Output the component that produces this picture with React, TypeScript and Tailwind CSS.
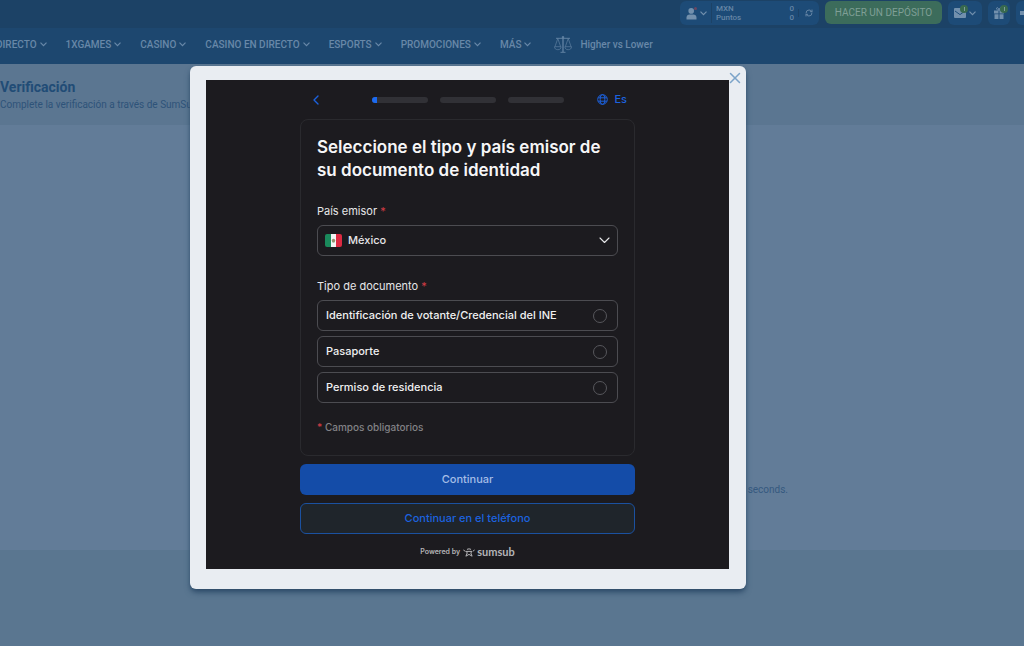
import { FC, ReactNode, useState } from 'react'
import { ChevronLeft, RefreshCw, X } from 'lucide-react'
import clsx from 'clsx'

const NAV_ITEMS = [
  'DIRECTO',
  '1XGAMES',
  'CASINO',
  'CASINO EN DIRECTO',
  'ESPORTS',
  'PROMOCIONES',
  'MÁS',
]

const DOCUMENT_TYPES = [
  { id: 'ine', label: 'Identificación de votante/Credencial del INE' },
  { id: 'passport', label: 'Pasaporte' },
  { id: 'residence', label: 'Permiso de residencia' },
]

const Caret = () => (
  <svg
    width="7"
    height="5"
    viewBox="0 0 7 5"
    fill="none"
    stroke="currentColor"
    strokeWidth="1.2"
  >
    <path d="M.5.7l3 3 3-3" />
  </svg>
)

const SelectArrow = () => (
  <svg
    width="11"
    height="7"
    viewBox="0 0 11 7"
    fill="none"
    stroke="currentColor"
    strokeWidth="1.1"
    strokeLinecap="round"
    strokeLinejoin="round"
  >
    <path d="M1 1l4.5 4.5L10 1" />
  </svg>
)

const UserIcon = () => (
  <svg width="11" height="13" viewBox="0 0 11 13" fill="currentColor">
    <circle cx="5.2" cy="3.9" r="2.8" />
    <path d="M0.5 12.4v-2C0.5 8.4 2 7.4 3.6 7.4h3.8c1.6 0 3.1 1 3.1 3v2z" />
  </svg>
)

const MailIcon = () => (
  <svg width="12" height="10" viewBox="0 0 12 10">
    <rect width="12" height="10" rx="1" fill="currentColor" />
    <path d="M1 3l5 3.6L11 3" fill="none" stroke="#1e4f7c" />
  </svg>
)

const GiftIcon = () => (
  <svg width="12" height="12" viewBox="0 0 12 12" fill="currentColor">
    <path d="M1 3.5h4.5v3H1zM6.5 3.5H11v3H6.5zM1.5 7.2h4V12h-4zM6.5 7.2h4V12h-4z" />
    <path
      d="M6 3.2C3 3.2 3 .7 4.3.7 5.3.7 6 2 6 3.2 6 2 6.7.7 7.7.7 9 .7 9 3.2 6 3.2z"
      fill="none"
      stroke="currentColor"
    />
  </svg>
)

const ScalesIcon = () => (
  <svg
    width="18"
    height="17"
    viewBox="0 0 18 17"
    fill="none"
    stroke="currentColor"
    strokeWidth="0.6"
  >
    <path d="M9 0v16" strokeWidth="1.2" />
    <path d="M6.5 16.3h5M2 2.3h14M7.8 1.2h2.4" strokeWidth="0.9" />
    <path d="M3.8 2.5L1 10.5M3.8 2.5l2.8 8M14.2 2.5l-2.8 8M14.2 2.5l2.8 8" />
    <path d="M.5 10.7h6.6c0 2-1.3 3-3.3 3s-3.3-1-3.3-3zM10.9 10.7h6.6c0 2-1.3 3-3.3 3s-3.3-1-3.3-3z" />
  </svg>
)

const GlobeIcon = () => (
  <svg
    width="11"
    height="11"
    viewBox="0 0 11 11"
    fill="none"
    stroke="currentColor"
    strokeWidth="1"
  >
    <circle cx="5.5" cy="5.5" r="4.8" />
    <ellipse cx="5.5" cy="5.5" rx="2.3" ry="4.8" />
    <path d="M1.2 3.8h8.6M1.2 7.2h8.6" />
  </svg>
)

const MexicoFlag = () => (
  <svg width="17" height="13" viewBox="0 0 17 13" className="rounded-xs">
    <path d="M0 0h6v13H0z" fill="#1a8a5c" />
    <path d="M6 0h5v13H6z" fill="#f4f4f4" />
    <path d="M11 0h6v13h-6z" fill="#dc2a42" />
    <ellipse cx="8.5" cy="6.5" rx="1.7" ry="1.8" fill="#9a8d6c" />
    <path d="M7 7.5c.8 1 2.2 1 3 0" fill="none" stroke="#5d8d5c" strokeWidth="0.6" />
  </svg>
)

const SumsubMark = () => (
  <svg
    width="12"
    height="9"
    viewBox="0 0 12 9"
    fill="none"
    stroke="currentColor"
    strokeWidth="1"
    strokeLinecap="round"
    strokeLinejoin="round"
  >
    <path d="M4.3 1.2a2.6 1.6 0 0 1 3.4 0" />
    <path d="M.7 2.2l1 .7M11.3 2.2l-1 .7" />
    <path d="M3 3.4h6L7.8 5l1.3 3.2L6 6.4 2.9 8.2 4.2 5z" />
  </svg>
)

interface HeaderChipProps {
  label: string
  badge?: boolean
  className?: string
  children: ReactNode
}

const HeaderChip: FC<HeaderChipProps> = ({
  label,
  badge = false,
  className,
  children,
}) => (
  <button
    type="button"
    aria-label={label}
    className={clsx(
      'relative flex h-6 shrink-0 items-center justify-center gap-[3px] rounded-md bg-[#1d4b77] text-[#7290ad]',
      className,
    )}
  >
    {children}
    {badge && (
      <span className="absolute top-1 left-3 flex size-2 items-center justify-center rounded-full bg-[#38694f]">
        <span className="h-1 w-px bg-[#7e9f96]" />
      </span>
    )}
  </button>
)

const TopBar = () => (
  <div className="flex h-7 items-start justify-end gap-1.5 bg-[#1c4266] pt-px">
    <div className="flex h-6 w-[139px] shrink-0 items-center rounded-md bg-[#1d4b77] text-[#6585a5]">
      <button
        type="button"
        aria-label="Cuenta"
        className="relative flex items-center gap-[3px] pl-1.5 text-[#7290ad]"
      >
        <UserIcon />
        <span className="absolute top-0 left-3.5 size-[3px] rounded-full bg-[#6b4560]" />
        <Caret />
      </button>
      <div className="ml-1 flex h-5 grow flex-col justify-center border-l border-[#1c4266] pr-1 pl-1 text-[8px] leading-[9px] font-medium">
        <div className="flex justify-between">
          <span>MXN</span>
          <span>0</span>
        </div>
        <div className="flex justify-between">
          <span>Puntos</span>
          <span>0</span>
        </div>
      </div>
      <button
        type="button"
        aria-label="Actualizar"
        className="border-l border-[#1c4266] px-1.5"
      >
        <RefreshCw size={8} strokeWidth={3} />
      </button>
    </div>
    <button
      type="button"
      className="h-[23px] w-[117px] shrink-0 rounded-md bg-[#3c6c5b] text-[10px] text-[#7f9f96]"
    >
      HACER UN DEPÓSITO
    </button>
    <HeaderChip label="Mensajes" badge className="w-[34px]">
      <MailIcon />
      <Caret />
    </HeaderChip>
    <HeaderChip label="Bonos" badge className="w-[22px]">
      <GiftIcon />
    </HeaderChip>
    <HeaderChip label="Ajustes" className="w-2 rounded-r-none">
      <span className="ml-1 size-1 bg-[#7290ad]" />
    </HeaderChip>
  </div>
)

const MainNav = () => (
  <nav className="flex h-9 items-center overflow-hidden bg-[#1d476f] pb-1 text-[10px] font-medium whitespace-nowrap text-[#6888a8]">
    <div className="-ml-1 flex items-center gap-[19px]">
      {NAV_ITEMS.map((item) => (
        <a key={item} href="#" className="flex items-center gap-[3px]">
          {item}
          <Caret />
        </a>
      ))}
      <a href="#" className="ml-1 flex items-center gap-2">
        <ScalesIcon />
        Higher vs Lower
      </a>
    </div>
  </nav>
)

const Steps = () => (
  <div className="flex gap-3">
    {[10, 0, 0].map((progress, index) => (
      <div
        key={index}
        className="h-1.5 w-14 overflow-hidden rounded-full bg-[#313136]"
      >
        <div className="h-full bg-[#1c6af0]" style={{ width: `${progress}%` }} />
      </div>
    ))}
  </div>
)

const Required = () => <span className="text-[#d13b44]">*</span>

const VerificationForm = () => {
  const [documentType, setDocumentType] = useState('')

  return (
    <form
      className="mx-auto flex w-[335px] flex-col font-['Inter',sans-serif]"
      onSubmit={(e) => e.preventDefault()}
    >
      <div className="grid h-[39px] grid-cols-[1fr_auto_1fr] items-center px-2 text-[#1c62df]">
        <button type="button" aria-label="Atrás" className="justify-self-start">
          <ChevronLeft size={16} strokeWidth={2} />
        </button>
        <Steps />
        <button
          type="button"
          className="flex items-center gap-1.5 justify-self-end text-[11px] font-medium"
        >
          <GlobeIcon />
          Es
        </button>
      </div>

      <div className="rounded-lg border border-[#2a2a2e] px-4 pt-4 pb-5">
        <h1 className="text-[17px] leading-[23px] font-semibold text-[#f6f6f7]">
          Seleccione el tipo y país emisor de su documento de identidad
        </h1>

        <label
          htmlFor="country"
          className="mt-[21px] block text-[11px] leading-4 text-[#e6e6e8]"
        >
          País emisor <Required />
        </label>
        <div className="relative mt-1.5 text-[#e6e6e8]">
          <select
            id="country"
            className="h-[31px] w-full appearance-none rounded-md border border-[#4c4c51] bg-transparent pl-[30px] text-[11px] font-medium"
          >
            <option>México</option>
          </select>
          <span className="pointer-events-none absolute inset-y-0 left-2 flex items-center">
            <MexicoFlag />
          </span>
          <span className="pointer-events-none absolute inset-y-0 right-2 flex items-center">
            <SelectArrow />
          </span>
        </div>

        <fieldset>
          <legend className="pt-[22px] text-[11px] leading-4 text-[#e6e6e8]">
            Tipo de documento <Required />
          </legend>
          <div className="mt-1.5 flex flex-col gap-[5px]">
            {DOCUMENT_TYPES.map(({ id, label }) => (
              <label
                key={id}
                className="flex h-[31px] items-center justify-between rounded-md border border-[#4c4c51] pr-2.5 pl-2 text-[11px] font-medium text-[#f0f0f1]"
              >
                {label}
                <input
                  type="radio"
                  name="documentType"
                  value={id}
                  checked={documentType === id}
                  onChange={() => setDocumentType(id)}
                  className="size-3.5 appearance-none rounded-full border border-[#57575c] checked:border-4 checked:border-[#1c62df]"
                />
              </label>
            ))}
          </div>
        </fieldset>

        <p className="mt-4 text-[10px] leading-4 font-medium text-[#828286]">
          <Required /> Campos obligatorios
        </p>
      </div>

      <button
        type="submit"
        className="mt-2 h-[31px] rounded-md bg-[#144ca8] text-[11px] font-medium text-[#a5bde6]"
      >
        Continuar
      </button>
      <button
        type="button"
        className="mt-2 h-[31px] rounded-md border border-[#1b51a0] bg-[#1f252b] text-[11px] font-medium text-[#1c62df]"
      >
        Continuar en el teléfono
      </button>

      <p className="mt-3 flex items-center justify-center gap-[3px] text-[7px] leading-3 font-semibold text-[#b4b4b7]">
        Powered by
        <span className="flex items-center gap-0.5 font-['Lato',sans-serif] text-[11px] font-bold">
          <SumsubMark />
          sumsub
        </span>
      </p>
    </form>
  )
}

const App = () => {
  const [open, setOpen] = useState(true)

  return (
    <div className="relative flex min-h-screen flex-col overflow-hidden bg-[#5a7690] font-['Roboto',sans-serif]">
      <header>
        <TopBar />
        <MainNav />
      </header>
      <section className="h-[61px] bg-[#5b7691] pt-3.5 text-[#214c76]">
        <h2 className="text-sm leading-[18px] font-bold">Verificación</h2>
        <p className="text-[10px] leading-[18px] text-[#2e5379]">
          Complete la verificación a través de SumSub
        </p>
      </section>
      <main className="flex h-[425px] items-end bg-[#627c98] pb-[52px] text-[#35597f]">
        <p className="w-full pr-[236px] text-right text-[10px] leading-4">
          You will be redirected in a few seconds.
        </p>
      </main>

      {open && (
        <div className="absolute inset-x-0 top-[66px] flex justify-center">
          <div
            role="dialog"
            aria-label="Verificación"
            className="relative mr-[88px] w-[556px] rounded-md bg-[#e9edf2] pt-3.5 pr-[17px] pb-5 pl-4 shadow-md shadow-[#2c4a68]"
          >
            <button
              type="button"
              aria-label="Cerrar"
              onClick={() => setOpen(false)}
              className="absolute top-[3px] right-0.5 text-[#7ba3c9]"
            >
              <X size={18} strokeWidth={2} />
            </button>
            <div className="bg-[#1c1b1f] pb-[11px]">
              <VerificationForm />
            </div>
          </div>
        </div>
      )}
    </div>
  )
}

export default App
